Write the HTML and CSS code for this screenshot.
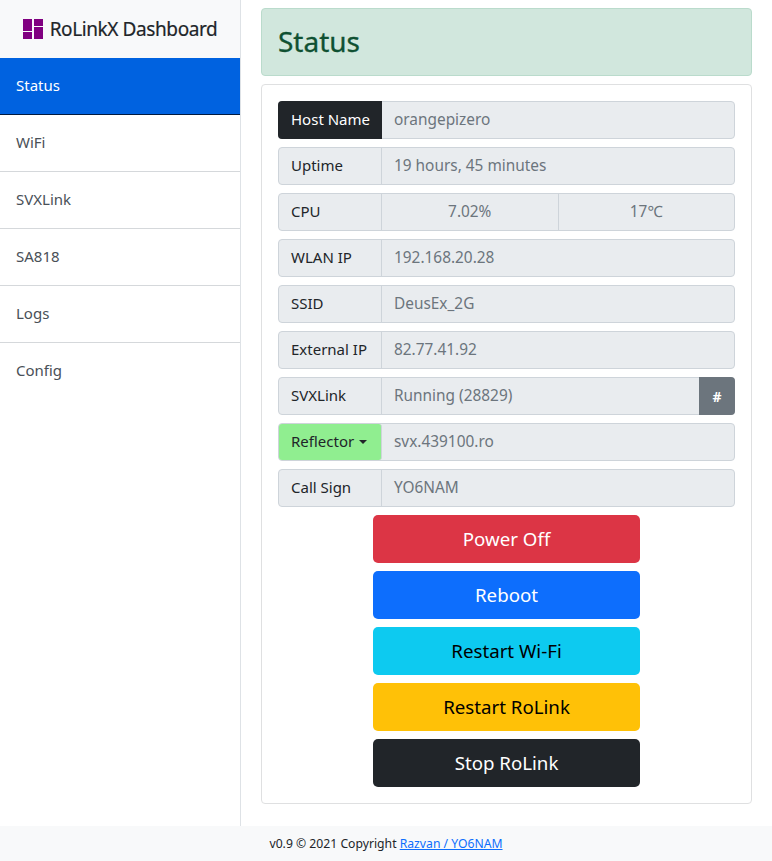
FILE: index.html

```html
<!DOCTYPE html>
<html lang="en">
<head>
  <meta charset="UTF-8" />
  <title>RoLinkX Dashboard</title>
  <link rel="stylesheet" href="styles.css">
</head>
<body>
  <div class="wrapper">
    <div class="sidebar">
      <div class="sidebar-heading">
        <svg class="logo" width="20" height="20" viewBox="0 0 20 20">
          <path fill="#800080" d="M0 0h9v12H0zM11 0h9v7h-9zM11 8h9v12h-9zM0 13h9v7H0z"/>
        </svg>
        <span>RoLinkX Dashboard</span>
      </div>
      <a class="nav-item active" href="#">Status</a>
      <a class="nav-item" href="#">WiFi</a>
      <a class="nav-item" href="#">SVXLink</a>
      <a class="nav-item" href="#">SA818</a>
      <a class="nav-item" href="#">Logs</a>
      <a class="nav-item" href="#">Config</a>
    </div>

    <div class="content">
      <div class="alert"><h4>Status</h4></div>
      <div class="card">
        <div class="input-group">
          <span class="label label-dark">Host Name</span>
          <span class="value">orangepizero</span>
        </div>
        <div class="input-group">
          <span class="label">Uptime</span>
          <span class="value">19 hours, 45 minutes</span>
        </div>
        <div class="input-group">
          <span class="label">CPU</span>
          <span class="value center">7.02%</span>
          <span class="value center">17℃</span>
        </div>
        <div class="input-group">
          <span class="label">WLAN IP</span>
          <span class="value">192.168.20.28</span>
        </div>
        <div class="input-group">
          <span class="label">SSID</span>
          <span class="value">DeusEx_2G</span>
        </div>
        <div class="input-group">
          <span class="label">External IP</span>
          <span class="value">82.77.41.92</span>
        </div>
        <div class="input-group">
          <span class="label">SVXLink</span>
          <span class="value">Running (28829)</span>
          <button class="hash">#</button>
        </div>
        <div class="input-group">
          <span class="label label-green">Reflector <i class="caret"></i></span>
          <span class="value">svx.439100.ro</span>
        </div>
        <div class="input-group">
          <span class="label">Call Sign</span>
          <span class="value">YO6NAM</span>
        </div>

        <div class="buttons">
          <button class="btn red">Power Off</button>
          <button class="btn blue">Reboot</button>
          <button class="btn cyan">Restart Wi-Fi</button>
          <button class="btn yellow">Restart RoLink</button>
          <button class="btn dark">Stop RoLink</button>
        </div>
      </div>
    </div>
  </div>

  <div class="footer">
    v0.9 © 2021 Copyright <a href="#">Razvan / YO6NAM</a>
  </div>
</body>
</html>
```

FILE: styles.css

```css
* {
  box-sizing: border-box;
}

body {
  margin: 0;
  font-family: "Noto Sans", sans-serif;
  font-size: 15px;
  color: #212529;
  background: #fff;
}

.wrapper {
  display: flex;
  height: 826px;
}

.sidebar {
  width: 241px;
  flex-shrink: 0;
  border-right: 1px solid #dee2e6;
}

.sidebar-heading {
  height: 58px;
  display: flex;
  align-items: center;
  justify-content: center;
  gap: 7px;
  background: #f8f9fa;
  font-size: 19px;
  letter-spacing: -0.4px;
  -webkit-text-stroke: 0.2px #212529;
}

.nav-item {
  display: block;
  height: 57px;
  padding: 15px 16px;
  color: #495057;
  text-decoration: none;
  border-bottom: 1px solid #d5d8db;
  line-height: 24px;
}

.nav-item:last-child {
  border-bottom: none;
}

.nav-item.active {
  background: #0062e0;
  color: #fff;
  border-bottom-color: #001a40;
}

.content {
  flex: 1;
  padding: 8px 20px 0;
}

.alert {
  height: 68px;
  margin-bottom: 8px;
  padding: 0 16px 2px;
  display: flex;
  align-items: center;
  background: #d1e7dd;
  border: 1px solid #badbcc;
  border-radius: 4px;
}

.alert h4 {
  margin: 0;
  font-size: 28px;
  font-weight: 400;
  -webkit-text-stroke: 0.3px #0f5132;
  color: #0f5132;
}

.card {
  height: 720px;
  padding: 16px;
  border: 1px solid #dfe0e1;
  border-radius: 4px;
}

.input-group {
  display: flex;
  height: 38px;
  margin-bottom: 8px;
  background: #e9ecef;
  border: 1px solid #ced4da;
  border-radius: 4px;
  line-height: 34px;
}

.label {
  width: 103px;
  flex-shrink: 0;
  padding: 0 12px;
  border-right: 1px solid #ced4da;
  white-space: nowrap;
}

.label-dark {
  width: 104px;
  margin: -1px 0 -1px -1px;
  padding: 1px 13px;
  background: #212529;
  color: #fff;
  border-right: none;
  border-radius: 4px 0 0 4px;
}

.label-green {
  background: #90ee90;
  border-radius: 3px;
}

.caret {
  display: inline-block;
  margin-left: 1px;
  vertical-align: 3px;
  border-top: 4.8px solid #212529;
  border-left: 4.8px solid transparent;
  border-right: 4.8px solid transparent;
}

.value {
  flex: 1;
  padding: 1px 12px 0;
  font-size: 15.4px;
  color: #6c757d;
}

.value.center {
  text-align: center;
}

.value.center + .value.center {
  border-left: 1px solid #ced4da;
}

.hash {
  width: 36px;
  margin: -1px -1px -1px 0;
  border: none;
  padding: 0;
  background: #6c757d;
  color: #fff;
  font-family: inherit;
  font-size: 14px;
  font-weight: 700;
  border-radius: 0 4px 4px 0;
}

.buttons {
  display: flex;
  flex-direction: column;
  align-items: center;
  gap: 8px;
}

.btn {
  width: 267px;
  height: 48px;
  padding: 0 0 2px;
  border: none;
  border-radius: 5px;
  font-family: inherit;
  font-size: 18.7px;
}

.red {
  background: #dc3545;
  color: #fff;
}

.blue {
  background: #0d6efd;
  color: #fff;
}

.cyan {
  background: #0dcaf0;
  color: #000;
}

.yellow {
  background: #ffc107;
  color: #000;
}

.dark {
  background: #212529;
  color: #fff;
}

.footer {
  height: 35px;
  background: #f8f9fa;
  text-align: center;
  font-size: 12.2px;
  line-height: 35px;
}

.footer a {
  color: #0d6efd;
}
```
